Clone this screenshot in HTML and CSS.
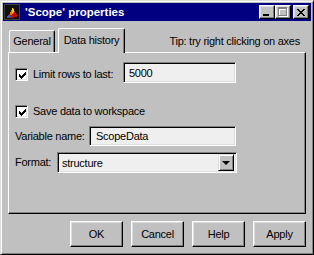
FILE: index.html
```html
<!DOCTYPE html>
<html>
<head>
    <link rel="stylesheet" href="styles.css">
</head>
<body>
    <div class="window">
        <!-- Title bar -->
        <div class="titlebar">
            <svg class="app_icon" width="16" height="16" viewBox="0 0 16 16" shape-rendering="crispEdges">
                <rect x="0" y="0" width="16" height="16" fill="#404040"/>
                <rect x="1" y="1" width="14" height="14" fill="#101010"/>
                <polygon points="2,13 6,9 9,3 11,8 14,12 9,14" fill="#c01000"/>
                <polygon points="6,9 9,3 10,8 7,12" fill="#ff7000"/>
                <polygon points="8,6 9,3 10,7 8,9" fill="#ffd000"/>
                <polygon points="2,13 5,11 7,13 4,14" fill="#3060c0"/>
            </svg>
            <span class="title">'Scope' properties</span>
            <div class="caption_buttons">
                <div class="cap_btn"><span class="min_glyph"></span></div>
                <div class="cap_btn"><span class="max_glyph"></span></div>
                <div class="cap_btn close_btn">
                    <svg width="8" height="7" viewBox="0 0 8 7" shape-rendering="crispEdges">
                        <path d="M0 0h2v1h-2z M6 0h2v1h-2z M1 1h2v1h-2z M5 1h2v1h-2z M2 2h4v1h-4z M3 3h2v1h-2z M2 4h4v1h-4z M1 5h2v1h-2z M5 5h2v1h-2z M0 6h2v1h-2z M6 6h2v1h-2z" fill="#000"/>
                    </svg>
                </div>
            </div>
        </div>

        <div class="content">
            <!-- Tabs -->
            <div class="tab_row">
                <div class="tab">General</div>
                <div class="tab tab_active">Data history</div>
                <div class="tip">Tip: try right clicking on axes</div>
            </div>

            <!-- Data history page -->
            <div class="panel">
                <div class="row row_limit">
                    <div class="check_label check_limit">
                        <span class="checkbox">
                            <svg width="7" height="7" viewBox="0 0 7 7" shape-rendering="crispEdges"><path d="M0 2v3h1v1h1v1h1v-1h1v-1h1v-1h1v-1h1v-3h-1v1h-1v1h-1v1h-1v1h-1v-1h-1v-1z" fill="#000"/></svg>
                        </span>
                        Limit rows to last:
                    </div>
                    <div class="edit edit_rows">5000</div>
                </div>

                <div class="row row_save">
                    <div class="check_label">
                        <span class="checkbox">
                            <svg width="7" height="7" viewBox="0 0 7 7" shape-rendering="crispEdges"><path d="M0 2v3h1v1h1v1h1v-1h1v-1h1v-1h1v-1h1v-3h-1v1h-1v1h-1v1h-1v1h-1v-1h-1v-1z" fill="#000"/></svg>
                        </span>
                        Save data to workspace
                    </div>
                </div>

                <div class="row row_var">
                    <span class="field_label label_var">Variable name:</span>
                    <div class="edit edit_var">ScopeData</div>
                </div>

                <div class="row row_format">
                    <span class="field_label label_format">Format:</span>
                    <div class="edit select_format">
                        <span class="select_text">structure</span>
                        <span class="drop_btn"><span class="drop_arrow"></span></span>
                    </div>
                </div>
            </div>

            <!-- Dialog buttons -->
            <div class="button_row">
                <button class="push_button">OK</button>
                <button class="push_button">Cancel</button>
                <button class="push_button">Help</button>
                <button class="push_button">Apply</button>
            </div>
        </div>
    </div>
</body>
</html>
```

FILE: styles.css
```css
body {
    margin: 0;
    background-color: #c0c0c0;
    font-family: 'Liberation Sans', Arial, sans-serif;
    font-size: 11px;
    letter-spacing: -0.25px;
    color: #000;
}

/* window frame */
.window {
    box-sizing: border-box;
    width: 314px;
    height: 255px;
    padding: 2px;
    background-color: #c0c0c0;
    border: 1px solid;
    border-color: #dfdfdf #000 #000 #dfdfdf;
    box-shadow: inset 1px 1px #fff, inset -1px -1px #808080;
}

.titlebar {
    display: flex;
    align-items: center;
    height: 18px;
    background-color: #000080;
    color: #fff;
}

.app_icon {
    display: block;
    margin-left: 1px;
    margin-right: 5px;
}

.title {
    font-weight: bold;
    font-size: 11.5px;
    letter-spacing: 0;
}

.caption_buttons {
    display: flex;
    margin-left: auto;
    margin-right: 2px;
}

.cap_btn {
    box-sizing: border-box;
    position: relative;
    width: 16px;
    height: 14px;
    background-color: #c0c0c0;
    border: 1px solid;
    border-color: #fff #000 #000 #fff;
    box-shadow: inset -1px -1px #808080, inset 1px 1px #dfdfdf;
}

.close_btn {
    margin-left: 2px;
    display: flex;
    justify-content: center;
    align-items: center;
}

.close_btn svg {
    display: block;
    margin-left: -1px;
}

.min_glyph {
    position: absolute;
    left: 3px;
    top: 8px;
    width: 6px;
    height: 2px;
    background-color: #000;
}

/* disabled maximize glyph */
.max_glyph {
    position: absolute;
    left: 2px;
    top: 1px;
    box-sizing: border-box;
    width: 9px;
    height: 9px;
    border: 1px solid #808080;
    border-top-width: 2px;
    box-shadow: 1px 1px #fff, inset 1px 1px #fff;
}

.content {
    padding: 0 5px;
}

/* tabs */
.tab_row {
    display: flex;
    align-items: flex-end;
    height: 31px;
}

.tab {
    box-sizing: border-box;
    height: 22px;
    width: 46px;
    margin-left: 1px;
    border: 1px solid;
    border-bottom: none;
    border-color: #fff #000 #000 #fff;
    border-radius: 2px 2px 0 0;
    box-shadow: inset -1px 0 #808080;
    text-align: center;
    line-height: 20px;
    background-color: #c0c0c0;
}

.tab_active {
    position: relative;
    z-index: 1;
    width: 67px;
    height: 25px;
    margin-left: 3px;
    margin-bottom: -1px;
    line-height: 22px;
}

.tip {
    margin-left: auto;
    margin-right: 6px;
    margin-bottom: 4px;
    line-height: 13px;
}

.panel {
    box-sizing: border-box;
    height: 162px;
    padding: 9px 6px 0;
    border: 1px solid;
    border-color: #fff #000 #000 #fff;
    box-shadow: inset -1px -1px #808080;
}

.row {
    display: flex;
    align-items: center;
}

.row_limit {
    height: 21px;
}

.row_save {
    height: 13px;
    margin-top: 22px;
}

.row_var {
    height: 20px;
    margin-top: 8px;
}

.row_format {
    height: 21px;
    margin-top: 6px;
}

.check_label {
    display: flex;
    align-items: center;
    line-height: 13px;
}

.check_limit {
    width: 108px;
    margin-top: 4px;
}

.checkbox {
    box-sizing: border-box;
    display: flex;
    justify-content: center;
    align-items: center;
    width: 13px;
    height: 13px;
    margin-right: 5px;
    background-color: #fff;
    border: 1px solid;
    border-color: #808080 #fff #fff #808080;
    box-shadow: inset 1px 1px #000, inset -1px -1px #dfdfdf;
}

.checkbox svg {
    display: block;
    margin: 1px 0 0 1px;
}

.field_label {
    line-height: 13px;
}

.label_var {
    width: 74px;
}

.label_format {
    width: 42px;
}

/* edit fields */
.edit {
    box-sizing: border-box;
    display: flex;
    align-items: center;
    height: 100%;
    padding-left: 5px;
    background-color: #efefef;
    border: 1px solid;
    border-color: #808080 #fff #fff #808080;
    box-shadow: inset 1px 1px #000, inset -1px -1px #dfdfdf;
}

.edit_rows {
    width: 113px;
}

.edit_var {
    width: 147px;
    padding-left: 6px;
}

.select_format {
    width: 180px;
    padding: 2px 2px 2px 4px;
}

.select_text {
    flex: 1;
}

.drop_btn {
    box-sizing: border-box;
    display: flex;
    justify-content: center;
    align-items: center;
    width: 16px;
    height: 17px;
    background-color: #c0c0c0;
    border: 1px solid;
    border-color: #dfdfdf #000 #000 #dfdfdf;
    box-shadow: inset 1px 1px #fff, inset -1px -1px #808080;
}

.drop_arrow {
    width: 0;
    height: 0;
    border-left: 4px solid transparent;
    border-right: 4px solid transparent;
    border-top: 4px solid #000;
}

/* dialog buttons */
.button_row {
    display: flex;
    justify-content: flex-end;
    gap: 8px;
    margin-top: 7px;
}

.push_button {
    box-sizing: border-box;
    width: 53px;
    height: 26px;
    padding: 0;
    font-family: 'Liberation Sans', Arial, sans-serif;
    font-size: 11px;
    letter-spacing: -0.25px;
    color: #000;
    background-color: #c0c0c0;
    border: 1px solid;
    border-color: #fff #000 #000 #fff;
    box-shadow: inset -1px -1px #808080, inset 1px 1px #dfdfdf;
}
```
